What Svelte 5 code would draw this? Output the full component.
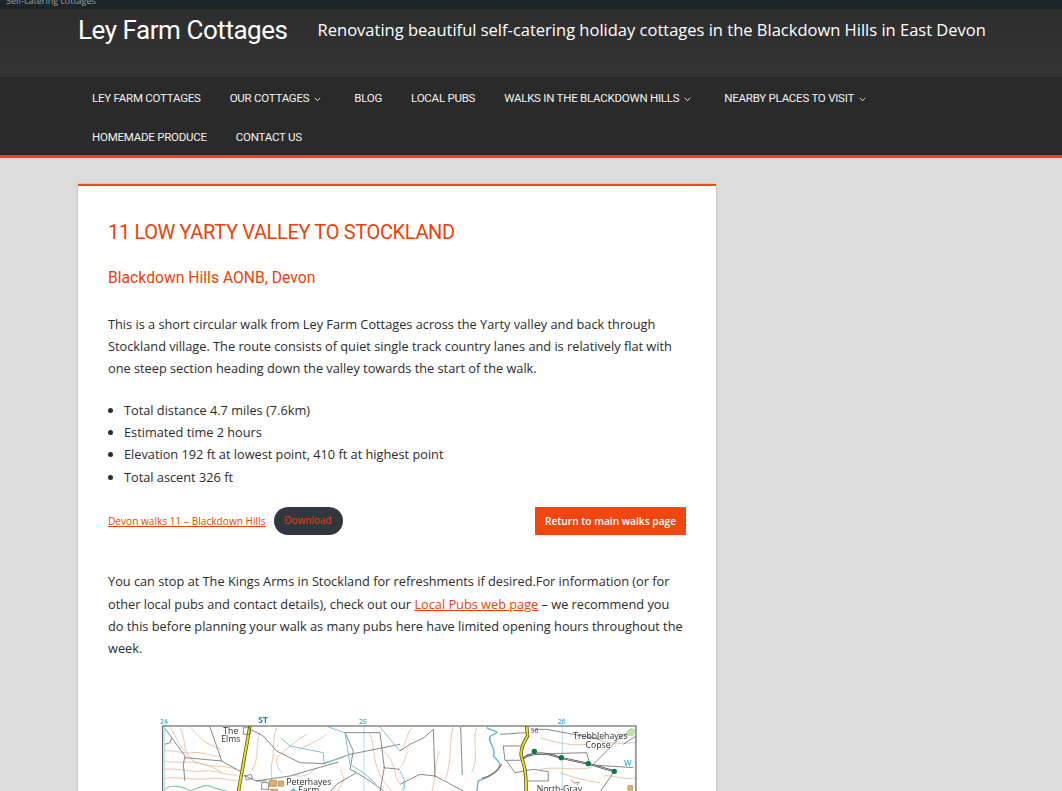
<script>
  const nav1 = [
    { t: 'LEY FARM COTTAGES' },
    { t: 'OUR COTTAGES', sub: true },
    { t: 'BLOG' },
    { t: 'LOCAL PUBS' },
    { t: 'WALKS IN THE BLACKDOWN HILLS', sub: true },
    { t: 'NEARBY PLACES TO VISIT', sub: true },
    { t: 'HOMEMADE PRODUCE' },
    { t: 'CONTACT US' }
  ];
  const facts = [
    'Total distance 4.7 miles (7.6km)',
    'Estimated time 2 hours',
    'Elevation 192 ft at lowest point, 410 ft at highest point',
    'Total ascent 326 ft'
  ];
  const leftContours = [
    'M90 80 C110 115 95 150 125 175 C150 195 175 185 215 215',
    'M60 78 C80 110 85 130 105 150',
    'M42 150 C70 145 100 160 125 155 C160 150 190 170 215 165',
    'M42 180 C80 190 110 175 160 190 C190 200 215 190 260 205',
    'M42 205 C80 200 120 215 160 210 C200 205 230 225 262 222',
    'M42 232 C80 225 130 240 190 232 C220 230 240 240 262 238',
    'M120 78 C150 110 165 130 215 145',
    'M380 80 C365 120 375 150 365 190 C360 215 375 240 350 273',
    'M330 95 C315 135 330 170 305 210',
    'M470 100 C435 120 405 150 385 165 C375 175 380 195 395 215',
    'M530 100 C500 125 470 130 445 150',
    'M500 200 C480 225 450 230 430 222',
    'M570 205 C590 235 575 250 560 273',
    'M660 100 C680 150 660 210 730 273',
    'M700 150 C740 180 730 230 750 250'
  ];
  const leftWalls = [
    'M45 82 L65 110 L60 125 L45 130',
    'M65 110 L105 165 L100 192 L105 240',
    'M105 170 L215 180 L272 212',
    'M180 78 L215 180',
    'M302 85 L340 105 L380 150 L450 185 L522 188 L600 160 L750 130',
    'M280 222 L318 240 L350 240',
    'M318 240 L420 225 L565 183',
    'M585 95 L690 95 L703 200 L690 273',
    'M585 95 L610 150 L600 205 L620 215',
    'M620 215 L560 250 L540 273',
    'M620 215 L660 240 L705 273',
    'M700 200 L750 205'
  ];
  const rightContours = [
    'M35 80 C15 110 20 130 0 150',
    'M160 78 C145 120 160 170 135 240',
    'M230 80 C215 120 240 170 215 215',
    'M120 150 C100 190 110 230 95 273',
    'M420 110 C470 125 510 135 560 130',
    'M420 205 C470 195 510 210 575 200',
    'M560 100 C600 125 640 130 705 125',
    'M610 225 C640 220 670 240 708 230',
    'M480 215 C520 230 560 240 600 245',
    'M20 230 C5 245 15 260 0 273',
    'M0 200 C20 180 10 170 25 150'
  ];
  const rightWalls = [
    'M100 85 L72 110 L30 130 L0 150',
    'M100 85 L105 228',
    'M182 78 L187 222',
    'M60 220 L105 225 L190 270',
    'M0 250 L60 220',
    'M300 100 L380 95',
    'M410 85 L440 85 L600 115',
    'M310 135 L362 135',
    'M310 135 L315 178 L362 178',
    'M380 160 L560 155 L570 190',
    'M580 192 L700 200',
    'M643 211 L600 273',
    'M672 98 L580 190',
    'M400 205 L445 212 L445 240 L385 240',
    'M320 180 L345 215 L400 205',
    'M708 105 L670 130'
  ];
</script>

<div class="page">
  <div class="topbar"><span>Self-catering cottages</span></div>

  <header class="brand">
    <div class="brand-row">
      <a class="site-title" href="#top">Ley Farm Cottages</a>
      <span class="tagline">Renovating beautiful self-catering holiday cottages in the Blackdown Hills in East Devon</span>
    </div>
  </header>

  <nav class="nav">
    <ul class="nav-list">
      {#each nav1 as item}
        <li class="nav-item">
          <a href="#top">{item.t}</a>
          {#if item.sub}
            <svg class="caret" width="7" height="5" viewBox="0 0 7 5" aria-hidden="true"><path d="M.8 1 3.5 3.6 6.2 1" fill="none" stroke="#e8e8e8" stroke-width="1"/></svg>
          {/if}
        </li>
      {/each}
    </ul>
  </nav>

  <main class="wrap">
    <article class="card">
      <h1>11 LOW YARTY VALLEY TO STOCKLAND</h1>
      <h2>Blackdown Hills AONB, Devon</h2>
      <p class="intro">This is a short circular walk from Ley Farm Cottages across the Yarty valley and back through Stockland village. The route consists of quiet single track country lanes and is relatively flat with one steep section heading down the valley towards the start of the walk.</p>
      <ul class="facts">
        {#each facts as f}<li>{f}</li>{/each}
      </ul>
      <div class="actions">
        <a class="file" href="#top">Devon walks 11 – Blackdown Hills</a>
        <a class="download" href="#top">Download</a>
        <a class="back" href="#top">Return to main walks page</a>
      </div>
      <p class="pubs">You can stop at The Kings Arms in Stockland for refreshments if desired.For information (or for other local pubs and contact details), check out our <a href="#top">Local Pubs web page</a> – we recommend you do this before planning your walk as many pubs here have limited opening hours throughout the week.</p>

      <svg class="map" width="490" height="77" viewBox="0 0 490 77" role="img" aria-label="Ordnance Survey map of the walk">
        <defs>
          <clipPath id="sheet"><rect x="38" y="75" width="1420" height="200"/></clipPath>
        </defs>
        <g transform="translate(-11 -14) scale(0.3333)" fill="none">
          <g clip-path="url(#sheet)">
            <path d="M44 75V273M642 75V273M1237 75V273" stroke="#b5dff2" stroke-width="3"/>
            {#each leftContours as d}<path {d} stroke="#e8b896" stroke-width="2.4"/>{/each}
            {#each leftWalls as d}<path {d} stroke="#5d5d5d" stroke-width="2.2"/>{/each}
            <path d="M392 110 L420 135 L520 155 L522 185 L580 170" stroke="#79c3dd" stroke-width="3"/>
            <path d="M535 78 L585 95 L600 190 L640 215 L680 250" stroke="#79c3dd" stroke-width="3"/>
            <path d="M690 78 L750 150" stroke="#79c3dd" stroke-width="3"/>
            <path d="M45 265 C60 250 100 255 120 270 C150 260 170 245 190 260 L240 273" stroke="#86c9a6" stroke-width="3.5"/>
            <path d="M300 75 L265 273" stroke="#3f3f1e" stroke-width="10"/>
            <path d="M300 75 L265 273" stroke="#ecdf1a" stroke-width="6"/>
            <path d="M280 80h20v20h-20zM285 225l18 -5 5 12 -18 5zM335 245h20v20h-20z" stroke="#555" stroke-width="2"/>
            <path d="M358 238h22v18h-22zM385 240h16v16h-16zM360 265h22v10h-22z" fill="#e0ad6a" stroke="#8a6a3a" stroke-width="1.5"/>
            <path d="M420 274 L430 264 L440 274" stroke="#4fb3d9" stroke-width="4"/>

            <g transform="translate(750 0)">
              {#each rightContours as d}<path {d} stroke="#e8b896" stroke-width="2.4"/>{/each}
              {#each rightWalls as d}<path {d} stroke="#5d5d5d" stroke-width="2.2"/>{/each}
              <path d="M670 105 L690 80 L708 85 L700 105z" fill="#bde0ad" stroke="none"/>
              <path d="M260 80 C290 95 305 90 272 105 C258 120 292 140 280 165 L298 185 C306 210 262 230 235 240 L230 273" stroke="#52b6dc" stroke-width="4"/>
              <path d="M0 210 C10 230 20 240 10 273" stroke="#79c3dd" stroke-width="3"/>
              <path d="M245 232 C265 228 290 215 305 190" stroke="#8a7a5a" stroke-width="4"/>
              <path d="M365 175 C400 150 440 155 480 170 L565 188 L640 210" stroke="#333" stroke-width="6"/>
              <path d="M365 175 C400 150 440 155 480 170 L565 188 L640 210" stroke="#b5b5b5" stroke-width="3"/>
              <path d="M380 75 L383 105 C370 125 360 150 365 170 C375 195 380 220 378 273" stroke="#3f3f1e" stroke-width="10"/>
              <path d="M380 75 L383 105 C370 125 360 150 365 170 C375 195 380 220 378 273" stroke="#ecdf1a" stroke-width="6"/>
              <path d="M684 254h14v14h-14z" fill="#e6b56e" stroke="#8a6a3a" stroke-width="1.5"/>
              <path d="M513 236l10 10 14-2 -6 8" stroke="#b78a4a" stroke-width="3"/>
              <g fill="#087a3f">
                <circle cx="403" cy="151" r="8"/><circle cx="484" cy="170" r="8"/><circle cx="565" cy="188" r="8"/><circle cx="643" cy="211" r="8"/>
              </g>
            </g>
          </g>

          <path d="M38 273V75H1458V273" stroke="#4f4f4f" stroke-width="3.2"/>
          <g class="grid">
            <text x="30" y="70">24</text>
            <text x="627" y="69">25</text>
            <text x="1223" y="69">26</text>
          </g>
          <text class="st" x="325" y="66">ST</text>
          <g class="place">
            <text x="220" y="98">The</text>
            <text x="214" y="122">Elms</text>
            <text x="409" y="251">Peterhayes</text>
            <text x="445" y="277">Farm</text>
            <text x="1270" y="113">Trebblehayes</text>
            <text x="1307" y="142">Copse</text>
            <text x="1160" y="274">North-Gray</text>
            <text x="1142" y="95" class="small">96</text>
          </g>
          <text class="w" x="1422" y="195">W</text>
        </g>
      </svg>
    </article>
  </main>
</div>

<style>
  :global(body) {
    margin: 0;
    background: #dcdcdc;
  }
  .page {
    height: 791px;
    overflow: hidden;
    background: #dcdcdc;
    font-family: "Open Sans", "Liberation Sans", sans-serif;
    font-size: 12.75px;
    line-height: 22.15px;
    color: #2b2b2b;
  }
  .topbar {
    height: 9px;
    background: #1c2529;
    overflow: hidden;
    color: #9aa0a2;
    font-size: 9px;
    line-height: 2px;
    padding-left: 6px;
  }
  .brand {
    height: 68px;
    background: linear-gradient(#2d2d2d, #343434);
  }
  .brand-row {
    display: flex;
    align-items: center;
    height: 42px;
    padding-left: 78px;
  }
  .site-title {
    font-family: Roboto, sans-serif;
    font-size: 26px;
    line-height: 40px;
    letter-spacing: -0.45px;
    color: #fff;
    text-decoration: none;
    margin-right: 30px;
  }
  .tagline {
    font-size: 16.5px;
    color: #fff;
    white-space: nowrap;
  }
  .nav {
    height: 78px;
    background: #2a2a2a;
    border-bottom: 3px solid #f2450f;
  }
  .nav-list {
    list-style: none;
    margin: 0;
    padding: 2px 0 0 77.6px;
    display: flex;
    flex-wrap: wrap;
    max-width: 900px;
  }
  .nav-item {
    height: 39px;
    display: flex;
    align-items: center;
    gap: 5px;
    padding: 0 14.5px;
  }
  .nav-item a {
    font-family: Roboto, sans-serif;
    font-size: 11.5px;
    letter-spacing: -0.24px;
    color: #f2f2f2;
    text-decoration: none;
  }
  .caret {
    margin: 2px 4px 0 0;
  }
  .wrap {
    padding: 26px 0 0 78px;
  }
  .card {
    width: 638px;
    height: 640px;
    box-sizing: border-box;
    padding: 31px 30px 0;
    background: #fff;
    border-top: 2px solid #f2450f;
    box-shadow: 0 0 2px rgba(0, 0, 0, 0.22);
  }
  h1 {
    margin: 0;
    font-family: Roboto, sans-serif;
    font-size: 20px;
    line-height: 30px;
    font-weight: 400;
    letter-spacing: -0.35px;
    color: #ef3f08;
  }
  h2 {
    margin: 20px 0 0;
    font-family: Roboto, sans-serif;
    font-size: 15.7px;
    line-height: 22px;
    font-weight: 400;
    color: #ef3f08;
  }
  .intro {
    margin: 24px 0 0;
  }
  .facts {
    margin: 19.6px 0 0;
    padding-left: 16px;
  }
  .actions {
    display: flex;
    align-items: center;
    margin-top: 19.4px;
    height: 28px;
  }
  .file {
    font-size: 10.15px;
    color: #ef3f08;
  }
  .download {
    margin-left: 8px;
    height: 28px;
    width: 69px;
    border-radius: 14px;
    background: #32373f;
    color: #e8400c;
    font-size: 10px;
    line-height: 27px;
    text-align: center;
    text-decoration: none;
  }
  .back {
    margin-left: auto;
    width: 151px;
    height: 28px;
    background: #f2450f;
    color: #fff;
    font-size: 10.2px;
    font-weight: 600;
    line-height: 28px;
    text-align: center;
    text-decoration: none;
  }
  .pubs {
    margin: 35.3px 0 0;
  }
  .pubs a {
    color: #ef3f08;
  }
  .map {
    display: block;
    margin: 55.8px 0 0 53px;
    overflow: visible;
    filter: blur(0.35px);
  }
  .grid text {
    font-size: 21px;
    font-weight: 600;
    fill: #38aee0;
    stroke: none;
  }
  .st {
    font-size: 25px;
    font-weight: 700;
    fill: #1a7fb8;
    stroke: none;
  }
  .place text {
    font-size: 26px;
    fill: #2e2e2e;
    stroke: none;
  }
  .place .small {
    font-size: 20px;
  }
  .w {
    font-size: 24px;
    font-weight: 600;
    fill: #38aee0;
    stroke: none;
  }
</style>
